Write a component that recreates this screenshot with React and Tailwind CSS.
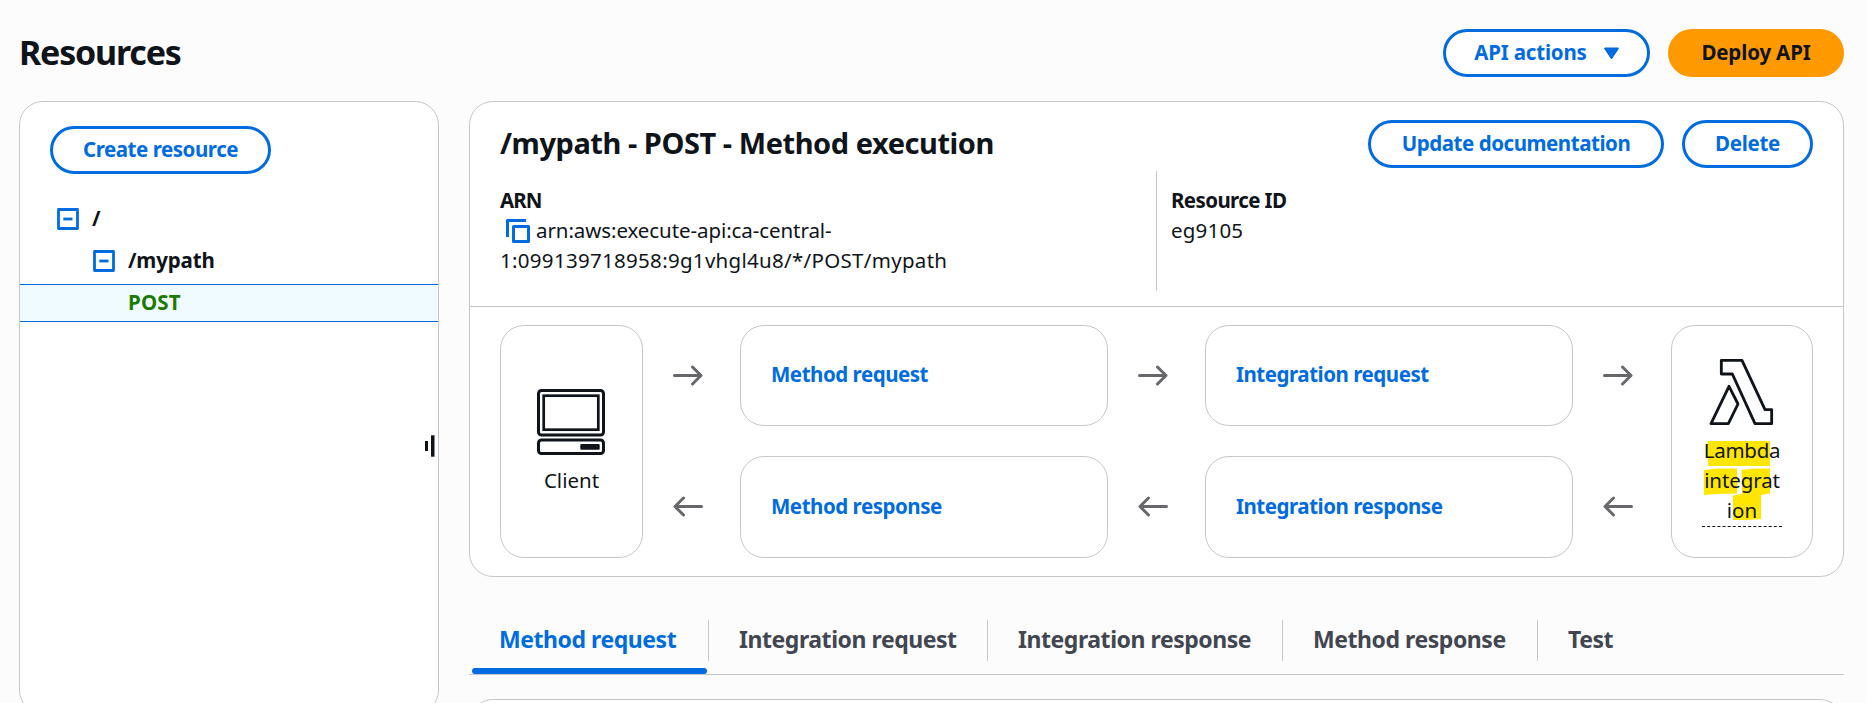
const tabs = [
  { label: "Method request", width: "w-[240px]", active: true },
  { label: "Integration request", width: "w-[279px]" },
  { label: "Integration response", width: "w-[295px]" },
  { label: "Method response", width: "w-[255px]" },
  { label: "Test", width: "w-[110px]", last: true },
];

function Button({ children, className = "" }) {
  return (
    <button
      className={`flex h-12 shrink-0 items-center justify-center whitespace-nowrap rounded-full border-[3px] border-[#006ce0] bg-white pb-0.5 text-[20.5px] font-bold text-[#006ce0] ${className}`}
    >
      {children}
    </button>
  );
}

function CollapseIcon() {
  return (
    <svg width="22" height="22" viewBox="0 0 22 22" fill="none" stroke="#006ce0" className="shrink-0">
      <rect x="1.5" y="1.5" width="19" height="19" strokeWidth="2.8" strokeLinejoin="round" />
      <path d="M6.3 11h9.2" strokeWidth="2.8" />
    </svg>
  );
}

function CopyIcon() {
  return (
    <svg width="24" height="24" viewBox="0 0 24 24" fill="none" stroke="#006ce0" strokeWidth="3" strokeLinejoin="round" className="ml-[6px] mr-[6px] mt-1 shrink-0">
      <path d="M1.5 18V1.5H20" />
      <rect x="7.5" y="7.5" width="15" height="15" />
    </svg>
  );
}

function Arrow({ left }) {
  return (
    <svg
      width="30"
      height="21"
      viewBox="0 0 30 21"
      fill="none"
      stroke="#66686b"
      strokeWidth="3"
      strokeLinecap="round"
      strokeLinejoin="round"
      className={left ? "rotate-180" : ""}
    >
      <path d="M1.5 10.5H27.5M19.5 2L28 10.5L19.5 19" />
    </svg>
  );
}

function ArrowColumn({ className }) {
  return (
    <div className={`flex flex-col items-center ${className}`}>
      <div className="flex h-[101px] items-center">
        <Arrow />
      </div>
      <div className="mt-[30px] flex h-[101px] items-center">
        <Arrow left />
      </div>
    </div>
  );
}

function StepColumn({ request, response }) {
  return (
    <div className="flex w-[368px] flex-col gap-[30px]">
      {[request, response].map((label) => (
        <div
          key={label}
          className="flex h-[101px] items-center rounded-3xl border border-[#c6c6cd] pb-[3px] pl-[30px] font-bold tracking-[-0.47px] text-[#006ce0] last:h-[102px]"
        >
          {label}
        </div>
      ))}
    </div>
  );
}

function ClientIcon() {
  return (
    <svg width="68" height="66" viewBox="0 0 68 66" fill="none" stroke="#0f141a" className="mr-[1px]">
      <rect x="1.5" y="1.5" width="65" height="44.5" rx="3" strokeWidth="3" />
      <rect x="6.7" y="6.7" width="54.6" height="34" strokeWidth="2.7" />
      <rect x="1.5" y="51" width="65" height="13.5" rx="3" strokeWidth="3" />
      <rect x="43.3" y="55" width="19.4" height="5.7" rx="1" fill="#0f141a" stroke="none" />
    </svg>
  );
}

function LambdaIcon() {
  return (
    <svg width="65" height="68" viewBox="0 0 195 204" fill="none" stroke="#0f141a" strokeWidth="8.5" strokeLinejoin="round" className="mr-[1px]">
      <path d="M37 7H99L168 155H188V197H138L70 48H37Z" />
      <path d="M60 85L87 138L58 197H6Z" />
    </svg>
  );
}

export default function App() {
  return (
    <div className="h-[703px] w-full overflow-hidden bg-[#fcfcfd] pl-[19px] pr-[22px] font-['Noto_Sans',sans-serif] text-[20.5px] leading-[30px] text-[#0f141a]">
      <header className="flex h-[101px] items-start justify-between pt-[29px]">
        <h1 className="mt-[1px] text-[34px] font-bold leading-[44px] tracking-[-1.2px]">Resources</h1>
        <div className="flex gap-[18px]">
          <Button className="w-[207px] gap-[17px] tracking-[-0.2px]">
            <span>API actions</span>
            <svg width="15" height="13" viewBox="0 0 15 13" fill="#006ce0" stroke="#006ce0" strokeWidth="2" strokeLinejoin="round" className="mt-[2px]">
              <path d="M1.2 1.5H13.8L7.5 11Z" />
            </svg>
          </Button>
          <button className="flex h-12 w-[176px] items-center justify-center rounded-full bg-[#ff9900] pb-0.5 text-[20.5px] font-bold tracking-[-0.15px] text-[#0f141a]">
            Deploy API
          </button>
        </div>
      </header>

      <div className="flex items-start gap-[30px]">
        <aside className="relative h-[613px] w-[420px] shrink-0 rounded-3xl border border-[#c6c6cd] bg-white pt-6">
          <Button className="ml-[30px] w-[221px] tracking-[-0.45px]">Create resource</Button>
          <ul className="mt-6 font-bold">
            <li className="flex h-[42px] items-center gap-[13px] pl-[37px]">
              <CollapseIcon />
              <span className="-mt-[2px]">/</span>
            </li>
            <li className="flex h-[42px] items-center gap-[13px] pl-[73px]">
              <CollapseIcon />
              <span className="-mt-[2px] tracking-[-0.15px]">/mypath</span>
            </li>
            <li className="mt-[2px] flex h-[38px] items-center border-y border-[#006ce0] bg-[#f0fbff] pb-[2px] pl-[108px] tracking-[0.2px] text-[#1d7a00]">
              POST
            </li>
          </ul>
          <svg width="10" height="22" viewBox="0 0 10 22" className="absolute right-[3px] top-[333px]" fill="#0f141a">
            <rect x="0" y="6" width="3" height="10" />
            <rect x="6" y="0.3" width="3.5" height="21.4" />
          </svg>
        </aside>

        <main className="min-w-0 flex-1">
          <section className="h-[476px] rounded-3xl border border-[#c6c6cd] bg-white">
            <div className="h-[205px] border-b border-[#c6c6cd] pl-[30px] pr-[30px] pt-[18px]">
              <div className="flex h-12 items-start justify-between">
                <h2 className="mt-[5px] text-[29px] font-bold leading-9 tracking-[-0.45px]">
                  /mypath - POST - Method execution
                </h2>
                <div className="flex gap-[18px]">
                  <Button className="w-[296px] tracking-[-0.45px]">Update documentation</Button>
                  <Button className="w-[131px] tracking-[-0.3px]">Delete</Button>
                </div>
              </div>
              <div className="mt-[3px] flex">
                <div className="w-[656px] pt-[14px]">
                  <div className="font-bold tracking-[-1px]">ARN</div>
                  <div className="flex h-[30px]">
                    <CopyIcon />
                    <span className="tracking-[-0.08px]">arn:aws:execute-api:ca-central-</span>
                  </div>
                  <div className="tracking-[0.3px]">1:099139718958:9g1vhgl4u8/*/POST/mypath</div>
                </div>
                <div className="h-[120px] border-l border-[#c6c6cd] pl-[14px] pt-[14px]">
                  <div className="font-bold tracking-[-0.6px]">Resource ID</div>
                  <div className="tracking-[0.2px]">eg9105</div>
                </div>
              </div>
            </div>

            <div className="flex px-[30px] pt-[18px]">
              <div className="flex h-[233px] w-[143px] flex-col items-center rounded-3xl border border-[#c6c6cd] pt-[63px]">
                <ClientIcon />
                <span className="mt-[10px]">Client</span>
              </div>
              <ArrowColumn className="w-[97px] pr-[7px]" />
              <StepColumn request="Method request" response="Method response" />
              <ArrowColumn className="w-[97px] pr-[7px]" />
              <StepColumn request="Integration request" response="Integration response" />
              <ArrowColumn className="w-[98px] pr-[8px]" />
              <div className="flex h-[233px] w-[142px] flex-col items-center rounded-3xl border border-[#c6c6cd] pt-8">
                <LambdaIcon />
                <div className="relative mt-[9px] h-[92px] w-20 border-b border-dashed border-[#0f141a] text-center">
                  <svg width="80" height="92" viewBox="0 0 80 92" fill="#ffe600" className="absolute left-0 top-0">
                    <path d="M5.5 6H68V31H6Z" />
                    <path d="M2 35L15 33.500H35V58.500L16 59L2 60Z" />
                    <path d="M39.500 35L52 33.500H68V58.500L59 60V84L46 85H31V60.500L40 59Z" />
                  </svg>
                  <div className="relative flex flex-col items-center">
                    <span className="tracking-[-0.3px]">Lambda</span>
                    <span className="tracking-[-0.1px]">integrat</span>
                    <span>ion</span>
                  </div>
                </div>
              </div>
            </div>
          </section>

          <nav className="mt-[42px] flex h-[56px] items-start border-b border-[#c6c6cd] text-[23px] font-bold tracking-[-0.45px] text-[#424650]">
            {tabs.map((tab) => (
              <div key={tab.label} className={`relative h-[55px] ${tab.width}`}>
                <div
                  className={`mt-[1px] flex h-[41px] items-center whitespace-nowrap pb-[3px] pl-[30px] ${
                    tab.last ? "" : "border-r border-[#c6c6cd]"
                  } ${tab.active ? "text-[#006ce0]" : ""}`}
                >
                  {tab.label}
                </div>
                {tab.active && <div className="ml-[3px] mt-[7px] h-[6px] w-[235px] rounded-[3px] bg-[#006ce0]" />}
              </div>
            ))}
          </nav>
          <section className="mt-6 h-20 rounded-3xl border border-[#c6c6cd] bg-white" />
        </main>
      </div>
    </div>
  );
}
